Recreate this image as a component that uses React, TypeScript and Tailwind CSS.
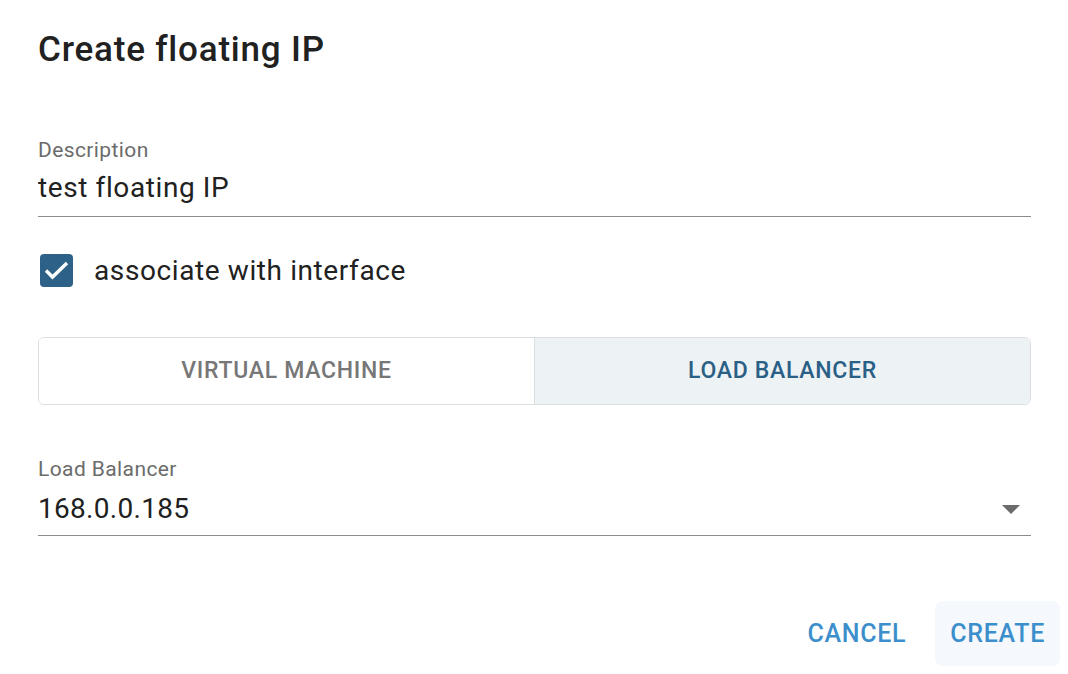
import React, { useState } from 'react';

const font = { fontFamily: 'Roboto, "Noto Sans", sans-serif' };

export default function App() {
  const [description, setDescription] = useState('test floating IP');
  const [associate, setAssociate] = useState(true);
  const [target, setTarget] = useState<'vm' | 'lb'>('lb');

  return (
    <div className="w-[1068px] h-[674px] bg-white text-[#212121]" style={font}>
      <div className="pl-[38px] pr-[37px] pt-[29px]">
        <h1 className="text-[35px] font-medium leading-[42px] tracking-[0.8px]">Create floating IP</h1>

        <div className="mt-[67px]">
          <label className="block text-[21px] text-[#6b6b6b] leading-[24px] tracking-[0.4px]">Description</label>
          <input
            value={description}
            onChange={e => setDescription(e.target.value)}
            className="block w-full mt-[10px] pb-[12px] text-[28px] leading-[32px] tracking-[0.6px] border-b border-[#8c8c8c] outline-none"
          />
        </div>

        <label className="flex items-center mt-[37px] cursor-pointer">
          <span
            onClick={() => setAssociate(!associate)}
            className={`ml-[2px] w-[33px] h-[33px] rounded-[4px] flex items-center justify-center ${
              associate ? 'bg-[#2d6187]' : 'border-2 border-[#777]'
            }`}
          >
            {associate && (
              <svg width="33" height="33" viewBox="0 0 33 33">
                <path d="M6 16.5l6.5 6.5L27 9" fill="none" stroke="white" strokeWidth="3.4" />
              </svg>
            )}
          </span>
          <span className="ml-[21px] text-[28px] leading-[32px] tracking-[0.6px]">associate with interface</span>
        </label>

        <div className="mt-[50px] flex h-[68px] border border-[#dcdfe2] rounded-[6px] overflow-hidden">
          <button
            onClick={() => setTarget('vm')}
            className={`flex-1 text-[23px] font-medium tracking-[0.7px] ${
              target === 'vm' ? 'bg-[#edf2f5] text-[#2a6085]' : 'bg-white text-[#777]'
            }`}
          >
            VIRTUAL MACHINE
          </button>
          <div className="w-px bg-[#dcdfe2]" />
          <button
            onClick={() => setTarget('lb')}
            className={`flex-1 text-[23px] font-medium tracking-[0.7px] ${
              target === 'lb' ? 'bg-[#edf2f5] text-[#2a6085]' : 'bg-white text-[#777]'
            }`}
          >
            LOAD BALANCER
          </button>
        </div>

        <div className="mt-[52px]">
          <label className="block text-[21px] text-[#6b6b6b] leading-[24px] tracking-[0.4px]">Load Balancer</label>
          <div className="flex items-center justify-between mt-[12px] pb-[10px] border-b border-[#8c8c8c]">
            <span className="text-[28px] leading-[32px] tracking-[0.3px]">168.0.0.185</span>
            <svg width="20" height="10" viewBox="0 0 20 10" className="mr-[10px] mt-[2px]">
              <path d="M1 0h18L10 9z" fill="#6b6b6b" />
            </svg>
          </div>
        </div>
      </div>

      <div className="flex justify-end items-center gap-[14px] mt-[65px] pr-[8px]">
        <button className="h-[65px] px-[15px] rounded-[8px] text-[25px] font-medium tracking-[0.7px] text-[#3d8fcc]">
          CANCEL
        </button>
        <button className="h-[65px] px-[15px] rounded-[8px] bg-[#f5f9fd] text-[25px] font-medium tracking-[0.7px] text-[#3d8fcc]">
          CREATE
        </button>
      </div>
    </div>
  );
}
